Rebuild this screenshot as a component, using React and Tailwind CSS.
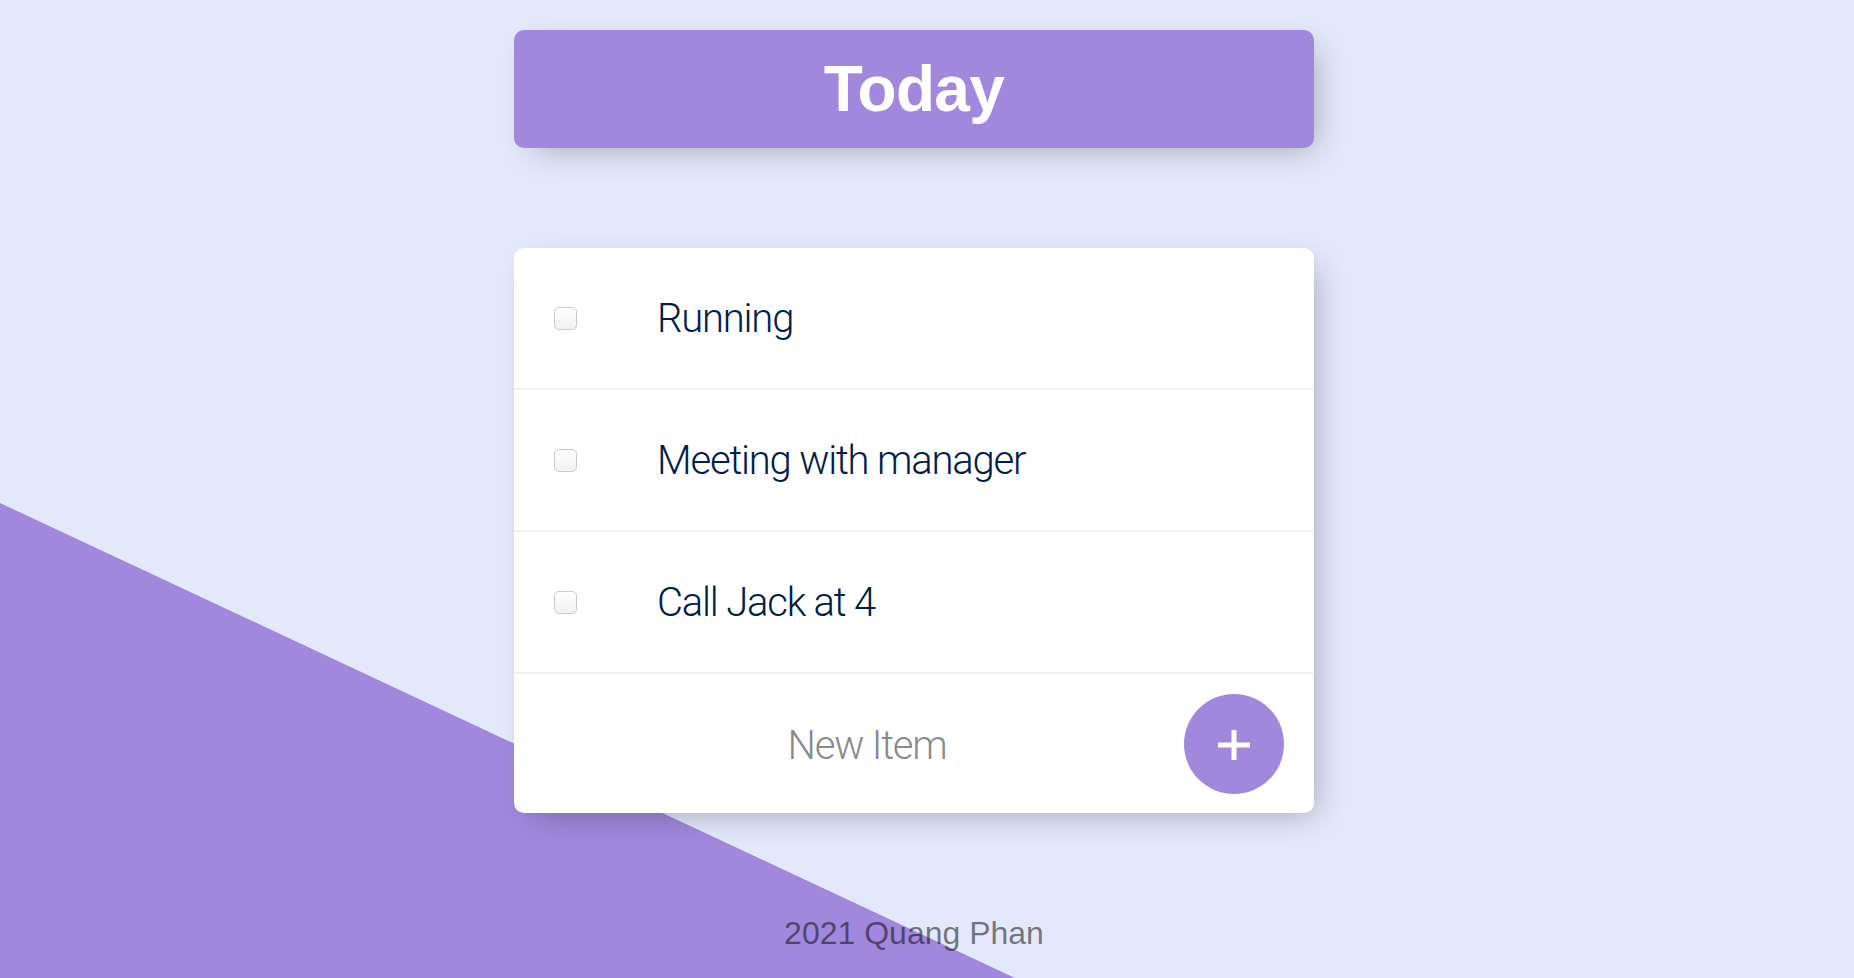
import React from 'react';

const items = ['Running', 'Meeting with manager', 'Call Jack at 4'];

const Checkbox = () => (
  <span className="ml-[40px] w-[23px] h-[23px] shrink-0 rounded-[5px] border border-[#cbcbcb] bg-gradient-to-b from-white to-[#f1f1f1]" />
);

export default function App() {
  return (
    <div className="relative h-[978px] w-full overflow-hidden bg-[#e4e8fb] font-['Liberation_Sans',Arial,sans-serif]">
      {/* diagonal background */}
      <div className="absolute inset-0 bg-[#a188dd] [clip-path:polygon(0_503px,1015px_978px,0_978px)]" />

      <div className="relative w-[1828px] flex flex-col items-center pt-[30px]">
        <div className="w-[800px] h-[118px] rounded-[10px] bg-[#a188dd] shadow-[10px_10px_30px_-10px_rgba(0,0,0,0.3)] flex items-center justify-center">
          <h1 className="text-[64px] font-bold leading-none tracking-[-0.01em] text-white">Today</h1>
        </div>

        <div className="mt-[100px] w-[800px] rounded-[10px] bg-white shadow-[10px_10px_30px_-10px_rgba(0,0,0,0.3)]">
          {items.map((item) => (
            <div key={item} className="h-[142px] flex items-center border-b-2 border-[#f1f1f1]">
              <Checkbox />
              <p className="ml-[80px] mt-[2px] font-['Roboto',sans-serif] font-light text-[40px] leading-none tracking-[-0.03em] text-[#00204a]">
                {item}
              </p>
            </div>
          ))}
          <form className="h-[139px] flex items-center" onSubmit={(e) => e.preventDefault()}>
            <input
              type="text"
              placeholder="New Item"
              className="ml-[40px] mt-[4px] w-[626px] h-[120px] text-center bg-transparent outline-none font-['Roboto',sans-serif] font-light text-[40px] tracking-[-0.03em] text-[#00204a] placeholder:text-[#8a8a8a]"
            />
            <button type="button" className="ml-[4px] w-[100px] h-[100px] rounded-full bg-[#a188dd] flex items-center justify-center">
              <svg width="32" height="30" viewBox="0 0 32 30" className="mt-[3px]">
                <path d="M0 15H32M16 0V30" stroke="white" strokeWidth="5" />
              </svg>
            </button>
          </form>
        </div>

        <footer className="mt-[104px] text-[32px] leading-none text-black/50">2021 Quang Phan</footer>
      </div>
    </div>
  );
}
